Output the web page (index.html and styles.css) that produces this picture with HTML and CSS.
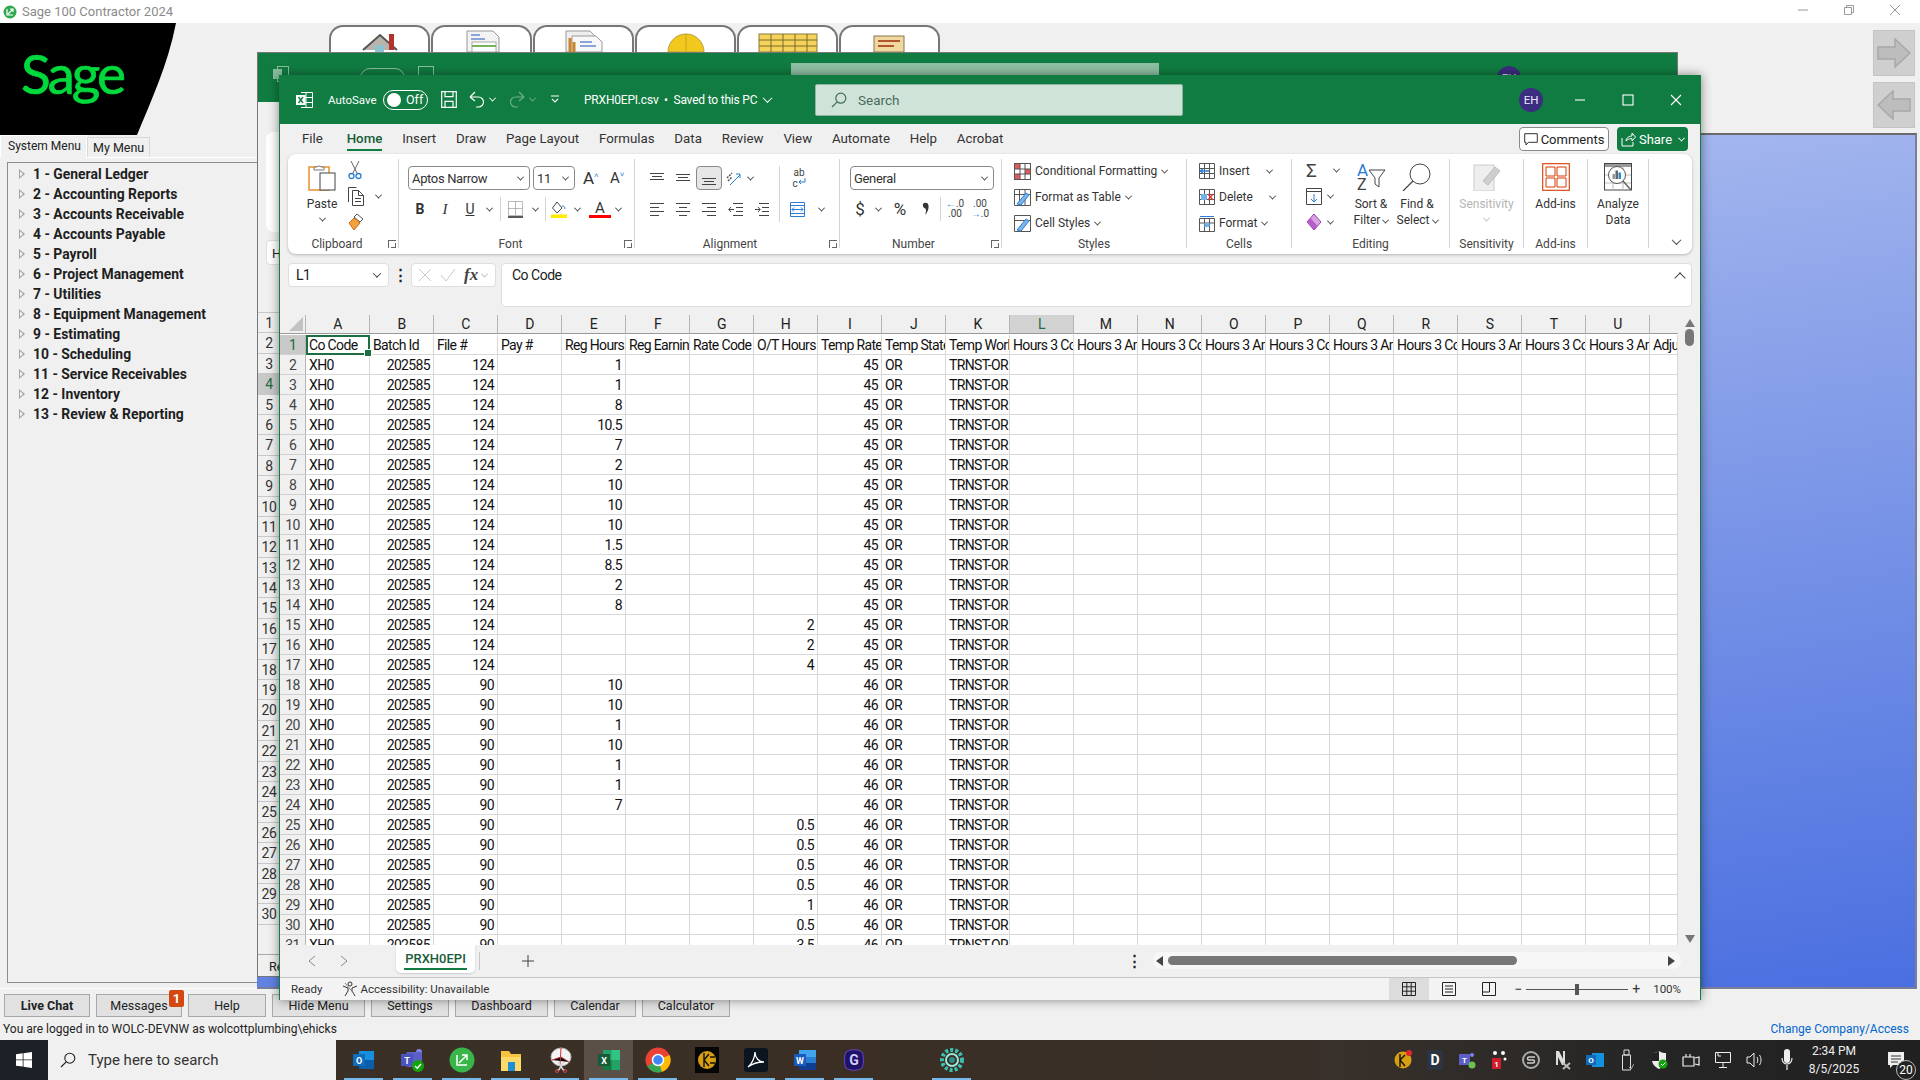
FILE: index.html
```html
<!DOCTYPE html>
<html lang="en">
<head>
    <meta charset="UTF-8">
    <title>Sage 100 Contractor 2024</title>
    <link rel="stylesheet" href="styles.css">
</head>
<body>
    <!-- Sage main window -->
    <div class="app-title">
        <svg class="app-logo" width="14" height="14" viewBox="0 0 14 14"><circle cx="7" cy="7" r="6.5" fill="#2fa84f"/><path d="M4 4v6h6M5 9l5-5M7 4h3v3" fill="none" stroke="#fff" stroke-width="1.2"/></svg>
        <span class="app-name">Sage 100 Contractor 2024</span>
        <div class="win-btns">
            <svg width="12" height="12" viewBox="0 0 12 12"><path d="M1 6h10" stroke="#999"/></svg>
            <svg width="12" height="12" viewBox="0 0 12 12"><path d="M1.5 3.5h7v7h-7zM3.5 3.5v-2h7v7h-2" fill="none" stroke="#999"/></svg>
            <svg width="12" height="12" viewBox="0 0 12 12"><path d="M1 1l10 10M11 1L1 11" stroke="#999"/></svg>
        </div>
    </div>

    <div class="app-body">
        <aside class="sidebar">
            <div class="logo">
                <svg class="logo-bg" width="176" height="112" viewBox="0 0 176 112"><path d="M0 0H176C168 42 150 80 137 112H0z" fill="#000"/></svg>
                <span class="logo-text">Sage</span>
            </div>
            <div class="menu-tabs">
                <div class="menu-tab active">System Menu</div>
                <div class="menu-tab">My Menu</div>
            </div>
            <ul class="tree">
                <li>1 - General Ledger</li>
                <li>2 - Accounting Reports</li>
                <li>3 - Accounts Receivable</li>
                <li>4 - Accounts Payable</li>
                <li>5 - Payroll</li>
                <li>6 - Project Management</li>
                <li>7 - Utilities</li>
                <li>8 - Equipment Management</li>
                <li>9 - Estimating</li>
                <li>10 - Scheduling</li>
                <li>11 - Service Receivables</li>
                <li>12 - Inventory</li>
                <li>13 - Review &amp; Reporting</li>
            </ul>
        </aside>
        <main class="workspace">
            <div class="workspace-top">
                <div class="tool-tabs">
                    <div class="tool-tab"><svg width="44" height="24" viewBox="0 0 44 24"><path d="M5 22L22 7l17 15" fill="#b8b4aa" stroke="#555" stroke-width="2"/><rect x="31" y="6" width="5" height="16" fill="#b3322c"/><rect x="17" y="17" width="9" height="7" fill="#8fc3cf"/></svg></div>
                    <div class="tool-tab"><svg width="44" height="24" viewBox="0 0 44 24"><path d="M7 3h26l6 6v15H7z" fill="#f3f3f3" stroke="#999"/><path d="M11 7h9M11 11h14" stroke="#8aa3d8" stroke-width="2"/><rect x="12" y="14" width="24" height="10" fill="#fff" stroke="#aaa"/><path d="M12 18h24" stroke="#76b35a" stroke-width="2"/></svg></div>
                    <div class="tool-tab"><svg width="48" height="24" viewBox="0 0 48 24"><path d="M6 3h24l6 6v15H6z" fill="#eee" stroke="#999"/><path d="M12 8h24l6 6v10H12z" fill="#f8f8f8" stroke="#999"/><path d="M10 10v14M14 14v10" stroke="#c8862f" stroke-width="3"/><path d="M20 14h12M20 18h16" stroke="#8aa3d8" stroke-width="2"/></svg></div>
                    <div class="tool-tab"><svg width="44" height="24" viewBox="0 0 44 24"><path d="M4 24a18 18 0 0 1 36 0z" fill="#f2c81e" stroke="#b6a03a"/><path d="M22 6v18" stroke="#caa51a"/></svg></div>
                    <div class="tool-tab"><svg width="62" height="24" viewBox="0 0 62 24"><rect x="2" y="6" width="58" height="18" fill="#f5d35a" stroke="#8a7a3a"/><path d="M2 12h58M2 18h58M14 6v18M26 6v18M38 6v18M50 6v18" stroke="#7a6a2a"/></svg></div>
                    <div class="tool-tab"><svg width="44" height="24" viewBox="0 0 44 24"><rect x="6" y="8" width="30" height="16" fill="#f0d9a0" stroke="#88774a"/><path d="M10 13h22M10 18h16" stroke="#b2552c" stroke-width="2"/></svg></div>
                </div>
                <div class="nav-arrows">
                    <div class="nav-arrow"><svg width="34" height="30" viewBox="0 0 34 30"><path d="M1 9h17V1l15 14-15 14v-8H1z" fill="#bdbdbd" stroke="#a8a8a8" stroke-width="1.5"/></svg></div>
                    <div class="nav-arrow"><svg width="34" height="30" viewBox="0 0 34 30"><path d="M33 9H16V1L1 15l15 14v-8h17z" fill="#bdbdbd" stroke="#a8a8a8" stroke-width="1.5"/></svg></div>
                </div>
            </div>
            <div class="blue-panel"></div>
        </main>
    </div>

    <div class="app-buttons">
        <button class="app-btn bold w86">Live Chat</button>
        <button class="app-btn w86 has-badge">Messages<span class="badge">1</span></button>
        <button class="app-btn w78">Help</button>
        <button class="app-btn w93">Hide Menu</button>
        <button class="app-btn w78">Settings</button>
        <button class="app-btn w93">Dashboard</button>
        <button class="app-btn w82">Calendar</button>
        <button class="app-btn w88">Calculator</button>
    </div>
    <div class="app-status">
        <span>You are logged in to WOLC-DEVNW as wolcottplumbing\ehicks</span>
        <a class="change-link">Change Company/Access</a>
    </div>

    <!-- Excel window behind -->
    <div class="xl-window back">
        <div class="xl-title ghost">
            <svg class="xl-icon" width="16" height="16" viewBox="0 0 16 16"><rect x="4.5" y=".5" width="11" height="15" fill="none" stroke="#fff"/><rect y="3" width="9" height="10" fill="#fff"/></svg>
            <span class="toggle ghost-toggle"></span>
            <svg class="ghost-save" width="16" height="16" viewBox="0 0 16 16"><rect x=".5" y=".5" width="15" height="15" fill="none" stroke="#fff"/></svg>
            <div class="ghost-search"></div>
            <span class="avatar ghost-avatar">EH</span>
        </div>
        <div class="back-ribbon"></div>
        <div class="back-name">H</div>
        <ul class="back-rows">
            <li>1</li><li>2</li><li>3</li><li class="sel">4</li><li>5</li><li>6</li><li>7</li><li>8</li><li>9</li><li>10</li>
            <li>11</li><li>12</li><li>13</li><li>14</li><li>15</li><li>16</li><li>17</li><li>18</li><li>19</li><li>20</li>
            <li>21</li><li>22</li><li>23</li><li>24</li><li>25</li><li>26</li><li>27</li><li>28</li><li>29</li><li>30</li>
        </ul>
        <div class="back-status">Re</div>
    </div>

    <!-- Excel window in front -->
    <div class="xl-window front">
        <div class="xl-title">
            <svg class="xl-icon" width="17" height="16" viewBox="0 0 17 16"><path d="M5 .5h11.5v15H5M10 .5v15M5 5.5h11.5M5 10.5h11.5" fill="none" stroke="#fff"/><rect y="3" width="9.5" height="10" fill="#fff"/><path d="M2.5 5l4.5 6M7 5l-4.5 6" stroke="#107c41" stroke-width="1.4"/></svg>
            <span class="autosave">AutoSave</span>
            <span class="toggle"><i></i>Off</span>
            <svg class="qat save" width="16" height="17" viewBox="0 0 16 17"><path d="M.7.7h14.6v15.6H.7zM4 .7v5h8v-5M4 16.3v-6h8v6" fill="none" stroke="#fff" stroke-width="1.2"/></svg>
            <svg class="qat undo" width="16" height="18" viewBox="0 0 16 18"><path d="M1 7h8.5a5 5 0 0 1 0 10H7M1 7l5-5M1 7l5 4" fill="none" stroke="#fff" stroke-width="1.2" transform="translate(0 -1)"/></svg>
            <i class="chev light"></i>
            <svg class="qat redo" width="16" height="18" viewBox="0 0 16 18"><path d="M15 6H6.5a5 5 0 0 0 0 10H9M15 6l-5-5M15 6l-5 4" fill="none" stroke="#6fae8c" stroke-width="1.2"/></svg>
            <i class="chev dim"></i>
            <svg class="qat more" width="10" height="9" viewBox="0 0 10 9"><path d="M1 1h8M2 4l3 3 3-3" fill="none" stroke="#fff" stroke-width="1.1"/></svg>
            <span class="doc-name">PRXH0EPI.csv &nbsp;&#8226;&nbsp; Saved to this PC</span>
            <i class="chev light big"></i>
            <div class="search">
                <svg width="16" height="16" viewBox="0 0 16 16"><circle cx="9.8" cy="6.2" r="5" fill="none" stroke="#3f6f57" stroke-width="1.2"/><path d="M6.2 9.8L1 15" stroke="#3f6f57" stroke-width="1.2"/></svg>
                <span>Search</span>
            </div>
            <span class="avatar">EH</span>
            <div class="xl-ctrls">
                <svg width="12" height="12" viewBox="0 0 12 12"><path d="M1 6h10" stroke="#fff" stroke-width="1.1"/></svg>
                <svg width="12" height="12" viewBox="0 0 12 12"><rect x="1" y="1" width="10" height="10" fill="none" stroke="#fff" stroke-width="1.1"/></svg>
                <svg width="12" height="12" viewBox="0 0 12 12"><path d="M1 1l10 10M11 1L1 11" stroke="#fff" stroke-width="1.1"/></svg>
            </div>
        </div>

        <div class="tabs-row">
            <nav class="ribbon-tabs">
                <a>File</a><a class="on">Home</a><a>Insert</a><a>Draw</a><a>Page Layout</a><a>Formulas</a><a>Data</a><a>Review</a><a>View</a><a>Automate</a><a>Help</a><a>Acrobat</a>
            </nav>
            <button class="comments"><svg width="14" height="13" viewBox="0 0 14 13"><path d="M.7.7h12.6v8.6H4.5L2 12V9.300H.7z" fill="none" stroke="#333"/></svg>Comments</button>
            <button class="share"><svg width="15" height="15" viewBox="0 0 15 15"><path d="M1 6v8h11v-4M5 9c0-3 3-5 6-5V1l3.500 4L11 9V6.500C8.500 6.500 6.500 7.500 5 9z" fill="none" stroke="#fff"/></svg>Share<i class="chev light"></i></button>
        </div>

        <div class="ribbon">
            <section class="group clipboard">
                <div class="group-body">
                    <div class="big-btn paste">
                        <svg width="28" height="28" viewBox="0 0 28 28"><rect x="1" y="4" width="20" height="23" fill="#fff" stroke="#e8912d" stroke-width="1.500"/><path d="M6 4h3a2.500 2.500 0 0 1 4 0h3v3H6z" fill="#fff" stroke="#777"/><rect x="12" y="10" width="15" height="17" fill="#fff" stroke="#444"/></svg>
                        <span>Paste</span>
                        <i class="chev"></i>
                    </div>
                    <div class="tool-col">
                        <svg width="14" height="20" viewBox="0 0 14 20"><path d="M3 1l6 12M11 1L5 13" stroke="#666" fill="none"/><circle cx="3.500" cy="16" r="2.500" fill="none" stroke="#2b7cd3" stroke-width="1.300"/><circle cx="10.500" cy="16" r="2.500" fill="none" stroke="#2b7cd3" stroke-width="1.300"/></svg>
                        <div class="row-i"><svg width="16" height="19" viewBox="0 0 16 19"><path d="M.5 15V.5h8M4.500 3.500h6l5 5v10h-11zM10.500 3.500v5h5M7 11.500h6M7 14.500h6" fill="none" stroke="#444"/></svg><i class="chev ml12"></i></div>
                        <svg width="16" height="18" viewBox="0 0 16 18"><path d="M9 1l6 5-3 3-6-5z" fill="#fff" stroke="#555"/><path d="M6 5L1 10l5 7 6-7z" fill="#f0a23c" stroke="#d4661b"/></svg>
                    </div>
                </div>
                <div class="group-label">Clipboard<i class="launcher"></i></div>
            </section>

            <section class="group font">
                <div class="group-body col">
                    <div class="tool-row first">
                        <div class="select w122"><span>Aptos Narrow</span><i class="chev"></i></div>
                        <div class="select w42"><span>11</span><i class="chev"></i></div>
                        <span class="grow-a">A<sup>&#708;</sup></span>
                        <span class="shrink-a">A<sup>&#709;</sup></span>
                    </div>
                    <div class="tool-row">
                        <span class="ti w24 b">B</span>
                        <span class="ti w26 it">I</span>
                        <span class="ti w24 un">U</span>
                        <span class="ti w14"><i class="chev"></i></span>
                        <span class="vsep m4"></span>
                        <span class="ti w20"><svg width="15" height="17" viewBox="0 0 15 17"><path d="M.5.500h14v14H.500z M7.500.500v14M.500 7.500h14" fill="none" stroke="#777" stroke-dasharray="1 1"/><path d="M0 16h15" stroke="#222" stroke-width="1.500"/></svg></span>
                        <span class="ti w20"><i class="chev"></i></span>
                        <span class="vsep"></span>
                        <span class="ti w26"><svg width="16" height="17" viewBox="0 0 16 17"><path d="M6 1L1.500 7 6 12l5-5z" fill="#fff" stroke="#444"/><path d="M11 5c2 0 3 1 3 3" fill="none" stroke="#2b7cd3"/><rect y="13.500" width="16" height="3.500" fill="#ffeb00"/></svg></span>
                        <span class="ti w10"><i class="chev"></i></span>
                        <span class="ti w22 ml7 color-a">A</span>
                        <span class="ti w14"><i class="chev"></i></span>
                    </div>
                </div>
                <div class="group-label">Font<i class="launcher"></i></div>
            </section>

            <section class="group align">
                <div class="group-body">
                    <div class="col align-left">
                        <div class="tool-row first">
                            <span class="ti w26"><svg class="lines" width="14" height="10" viewBox="0 0 14 10"><path d="M0 .5h14M2 3.500h10M0 6.500h14"/></svg></span>
                            <span class="ti w26"><svg class="lines" width="14" height="10" viewBox="0 0 14 10"><path d="M0 1.500h14M2 4.500h10M0 7.500h14"/></svg></span>
                            <span class="ti w26 picked"><svg class="lines" width="14" height="14" viewBox="0 0 14 14"><path d="M0 7.500h14M2 10.500h10M0 13.500h14"/></svg></span>
                            <span class="ti w22"><svg width="16" height="16" viewBox="0 0 16 16"><path d="M2 8l5-5M3 11l4-4" stroke="#555" fill="none" stroke-width="1.500" stroke-dasharray="2 1"/><path d="M5 15L15 5M11 4h4v4" stroke="#2b7cd3" fill="none"/></svg></span>
                            <span class="ti w12"><i class="chev"></i></span>
                        </div>
                        <div class="tool-row">
                            <span class="ti w26"><svg class="lines" width="14" height="13" viewBox="0 0 14 13"><path d="M0 .5h14M0 4.500h9M0 8.500h14M0 12.500h9"/></svg></span>
                            <span class="ti w26"><svg class="lines" width="14" height="13" viewBox="0 0 14 13"><path d="M0 .5h14M3 4.500h8M0 8.500h14M3 12.500h8"/></svg></span>
                            <span class="ti w26"><svg class="lines" width="14" height="13" viewBox="0 0 14 13"><path d="M0 .5h14M5 4.500h9M0 8.500h14M5 12.500h9"/></svg></span>
                            <span class="ti w26"><svg class="lines" width="15" height="13" viewBox="0 0 15 13"><path d="M5 .5h10M8 4.500h7M8 8.500h7M5 12.500h10"/><path d="M6 6.500H1M3 4L.8 6.500 3 9" fill="none" stroke="#2b7cd3"/></svg></span>
                            <span class="ti w26"><svg class="lines" width="15" height="13" viewBox="0 0 15 13"><path d="M5 .5h10M8 4.500h7M8 8.500h7M5 12.500h10"/><path d="M1 6.500h5M4 4l2.200 2.500L4 9" fill="none" stroke="#2b7cd3"/></svg></span>
                        </div>
                    </div>
                    <span class="vsep tall"></span>
                    <div class="col align-right">
                        <div class="tool-row first"><span class="ti w26 wrap-ab">ab<br>c<svg width="8" height="9" viewBox="0 0 8 9"><path d="M7 0v4H1M3 2L1 4l2 2" fill="none" stroke="#2b7cd3"/></svg></span></div>
                        <div class="tool-row">
                            <span class="ti w22"><svg width="15" height="15" viewBox="0 0 15 15"><path d="M.5.500h14v14H.500zM.500 3.500h14M.500 11.500h14" fill="none" stroke="#2b7cd3"/><path d="M2 7.500h11M4 5.500l-2 2 2 2M11 5.500l2 2-2 2" fill="none" stroke="#2b7cd3"/></svg></span>
                            <span class="ti w12 ml7"><i class="chev"></i></span>
                        </div>
                    </div>
                </div>
                <div class="group-label pad14">Alignment<i class="launcher"></i></div>
            </section>

            <section class="group number">
                <div class="group-body col">
                    <div class="tool-row first"><div class="select w144"><span>General</span><i class="chev"></i></div></div>
                    <div class="tool-row">
                        <span class="ti w20 sym">$</span>
                        <span class="ti w16"><i class="chev"></i></span>
                        <span class="ti w20 ml4 sym">%</span>
                        <span class="ti w20 ml6"><svg width="8" height="14" viewBox="0 0 8 14"><path d="M1 2a3 3 0 0 1 5 0c1.500 3 0 8-3 11 1-3 1.500-5 .5-6.500C2 6.500.5 4.500 1 2z" fill="#333"/></svg></span>
                        <span class="vsep m4"></span>
                        <span class="ti w20 dec"><b>&#8592;</b>.0<br>.00</span>
                        <span class="ti w20 ml5 dec">.00<br><b>&#8594;</b>.0</span>
                    </div>
                </div>
                <div class="group-label pad14">Number<i class="launcher"></i></div>
            </section>

            <section class="group styles">
                <div class="group-body">
                    <div class="tool-col text-col">
                        <div class="row-i"><svg width="17" height="17" viewBox="0 0 17 17"><rect x=".5" y=".5" width="16" height="16" fill="#fff" stroke="#555"/><rect x="1" y="1" width="5" height="5" fill="#e05a5a"/><rect x="11" y="6" width="5" height="5" fill="#e05a5a"/><rect x="1" y="11" width="5" height="5" fill="#e05a5a"/><path d="M6 .5v16M11 .5v16M.5 6h16M.5 11h16" stroke="#555"/></svg><span>Conditional Formatting</span><i class="chev"></i></div>
                        <div class="row-i"><svg width="17" height="17" viewBox="0 0 17 17"><path d="M.5.500h16v16H.500zM.500 5.500h16M5.500.500v16M11 .500v16" fill="#fff" stroke="#555"/><path d="M3 15L12 4l3 2L7 16z" fill="#7cb5ec" stroke="#2b7cd3"/></svg><span>Format as Table</span><i class="chev"></i></div>
                        <div class="row-i"><svg width="17" height="17" viewBox="0 0 17 17"><path d="M.5.500h16v16H.500zM.500 5.500h16" fill="#fff" stroke="#555"/><path d="M3 15L12 4l3 2L7 16z" fill="#7cb5ec" stroke="#2b7cd3"/></svg><span>Cell Styles</span><i class="chev"></i></div>
                    </div>
                </div>
                <div class="group-label">Styles</div>
            </section>

            <section class="group cells">
                <div class="group-body">
                    <div class="tool-col text-col">
                        <div class="row-i"><svg width="16" height="16" viewBox="0 0 16 16"><path d="M.5.500h15v15H.500zM.500 5.500h15M.500 10.500h15M5.500.500v15M10.500.500v15" fill="#fff" stroke="#555"/><path d="M1 8h9M4 5.500L1.500 8 4 10.500" stroke="#2b7cd3" fill="none" stroke-width="1.300"/></svg><span>Insert</span><i class="chev ml18"></i></div>
                        <div class="row-i"><svg width="16" height="16" viewBox="0 0 16 16"><path d="M.5.500h15v15H.500zM.500 5.500h15M.500 10.500h15M5.500.500v15M10.500.500v15" fill="#fff" stroke="#555"/><rect x="2" y="5" width="6" height="6" fill="#6fb3e8"/><path d="M9 5l5 6M14 5l-5 6" stroke="#e03a3a" stroke-width="1.300"/></svg><span>Delete</span><i class="chev ml18"></i></div>
                        <div class="row-i"><svg width="16" height="17" viewBox="0 0 16 17"><path d="M.5 3.500h15v13H.500zM.500 8h15M5.500 3.500v13M10.500 3.500v13" fill="#fff" stroke="#555"/><rect x="5.500" y="8" width="5" height="4" fill="#6fb3e8"/><path d="M1 1.500h14" stroke="#2b7cd3"/></svg><span>Format</span><i class="chev"></i></div>
                    </div>
                </div>
                <div class="group-label">Cells</div>
            </section>

            <section class="group editing">
                <div class="group-body">
                    <div class="tool-col edit-col">
                        <div class="row-i"><span class="sigma">&#931;</span><i class="chev ml12"></i></div>
                        <div class="row-i"><svg width="16" height="17" viewBox="0 0 16 17"><path d="M.5.500h15v16H.500zM.500 3.500h15" fill="#fff" stroke="#444"/><path d="M8 6v8M5 11l3 3 3-3" fill="none" stroke="#2b7cd3"/></svg><i class="chev ml6"></i></div>
                        <div class="row-i"><svg width="16" height="18" viewBox="0 0 16 18"><path d="M8 1l7 8-7 8-7-8z" fill="#d9a3e3" stroke="#9a3db0"/><path d="M1 9l7 8 3.500-4L4.500 5z" fill="#b55ec9"/></svg><i class="chev ml6"></i></div>
                    </div>
                    <div class="big-btn w40">
                        <svg width="30" height="28" viewBox="0 0 30 28"><text x="1" y="13" class="sort-a">A</text><text x="1" y="27" class="sort-z">Z</text><path d="M13 7h16l-6 8v9l-4-3v-6z" fill="#fff" stroke="#444"/></svg>
                        <span>Sort &amp;</span>
                        <span>Filter<i class="chev ml3"></i></span>
                    </div>
                    <div class="big-btn w40 ml6">
                        <svg width="30" height="28" viewBox="0 0 30 28"><circle cx="18" cy="11" r="10" fill="#fff" stroke="#444"/><path d="M11 18L1 28" stroke="#444" stroke-width="1.200"/></svg>
                        <span>Find &amp;</span>
                        <span>Select<i class="chev ml3"></i></span>
                    </div>
                </div>
                <div class="group-label">Editing</div>
            </section>

            <section class="group sensitivity">
                <div class="group-body">
                    <div class="big-btn disabled">
                        <svg width="28" height="28" viewBox="0 0 28 28"><rect x="1" y="2" width="20" height="26" fill="#eee" stroke="#ccc"/><path d="M10 18L22 4l5 4-12 14z" fill="#cfcfcf" stroke="#bbb"/></svg>
                        <span>Sensitivity</span>
                        <i class="chev pale"></i>
                    </div>
                </div>
                <div class="group-label">Sensitivity</div>
            </section>

            <section class="group addins">
                <div class="group-body">
                    <div class="big-btn">
                        <svg width="28" height="28" viewBox="0 0 28 28"><rect x=".7" y=".7" width="26.600" height="26.600" fill="none" stroke="#d83b01" stroke-width="1.100"/><path d="M4 4h9v9H4zM15 4h9v9h-9zM4 15h9v9H4zM15 15h9v9h-9z" fill="none" stroke="#d83b01"/></svg>
                        <span>Add-ins</span>
                    </div>
                </div>
                <div class="group-label">Add-ins</div>
            </section>

            <section class="group analyze">
                <div class="group-body">
                    <div class="big-btn">
                        <svg width="28" height="28" viewBox="0 0 28 28"><rect x=".5" y=".5" width="27" height="26.500" fill="#fff" stroke="#444"/><rect x="1" y="1" width="26" height="3" fill="#999"/><path d="M1 12h26M1 20h26M9 4v23M19 4v23" stroke="#bbb"/><circle cx="13" cy="12" r="8.500" fill="#fff" stroke="#555"/><rect x="8.500" y="11" width="2.500" height="5" fill="#999"/><rect x="11.500" y="7.500" width="2.500" height="8.500" fill="#666"/><rect x="14.500" y="9.500" width="2.500" height="6.500" fill="#2b8ad3"/><path d="M19 18l8 9" stroke="#666" stroke-width="1.500"/></svg>
                        <span>Analyze</span>
                        <span>Data</span>
                    </div>
                </div>
                <div class="group-label"></div>
            </section>
            <i class="chev collapse"></i>
        </div>

        <div class="formula-row">
            <div class="name-box"><span>L1</span><i class="chev"></i></div>
            <span class="dots">&#8942;</span>
            <div class="fx-box">
                <svg width="14" height="14" viewBox="0 0 14 14"><path d="M1 1l12 12M13 1L1 13" stroke="#c8c8c8"/></svg>
                <svg width="16" height="14" viewBox="0 0 16 14"><path d="M1 7l5 6L15 1" fill="none" stroke="#c8c8c8"/></svg>
                <span class="fx">fx</span>
                <i class="chev pale"></i>
            </div>
            <div class="formula-input"><span>Co Code</span><i class="chev up"></i></div>
        </div>

        <div class="sheet-area">
            <div class="sheet" id="sheet"></div>
            <div class="vscroll">
                <svg width="10" height="8" viewBox="0 0 10 8"><path d="M5 0l5 8H0z" fill="#777"/></svg>
                <span class="vthumb"></span>
                <svg class="vdown" width="10" height="8" viewBox="0 0 10 8"><path d="M0 0h10L5 8z" fill="#777"/></svg>
            </div>
        </div>

        <div class="sheet-bar">
            <svg class="nav-l" width="8" height="12" viewBox="0 0 8 12"><path d="M7 1L1 6l6 5" fill="none" stroke="#888"/></svg>
            <svg class="nav-r" width="8" height="12" viewBox="0 0 8 12"><path d="M1 1l6 5-6 5" fill="none" stroke="#888"/></svg>
            <div class="sheet-tab"><span>PRXH0EPI</span></div>
            <span class="tab-sep"></span>
            <svg class="add-sheet" width="12" height="12" viewBox="0 0 12 12"><path d="M6 0v12M0 6h12" stroke="#444"/></svg>
            <span class="dots bar-dots">&#8942;</span>
            <div class="hscroll">
                <svg width="7" height="10" viewBox="0 0 7 10"><path d="M7 0v10L0 5z" fill="#444"/></svg>
                <span class="hthumb"></span>
                <svg class="hright" width="7" height="10" viewBox="0 0 7 10"><path d="M0 0v10l7-5z" fill="#444"/></svg>
            </div>
        </div>

        <div class="status-bar">
            <span class="ready">Ready</span>
            <svg class="access" width="16" height="16" viewBox="0 0 16 16"><circle cx="8" cy="3" r="2" fill="none" stroke="#333"/><path d="M1 5l5 2v3l-3 5M15 5l-5 2v3l3 5" fill="none" stroke="#333"/><path d="M3 2l10 12" stroke="#888"/></svg>
            <span class="access-text">Accessibility: Unavailable</span>
            <div class="view-btn on"><svg width="14" height="14" viewBox="0 0 14 14"><path d="M.5.500h13v13H.500zM.500 4.800h13M.500 9.200h13M4.800.500v13M9.200.500v13" fill="none" stroke="#222"/></svg></div>
            <div class="view-btn"><svg width="14" height="14" viewBox="0 0 14 14"><path d="M.5.500h13v13H.500zM3 4h8M3 7h8M3 10h8" fill="none" stroke="#222"/></svg></div>
            <div class="view-btn"><svg width="14" height="14" viewBox="0 0 14 14"><path d="M.5.500h13v13H.500zM.500 10h7V.500" fill="none" stroke="#222"/></svg></div>
            <div class="zoom">
                <span class="zoom-sign">&minus;</span>
                <div class="zoom-track"><i></i></div>
                <span class="zoom-sign">+</span>
                <span class="zoom-val">100%</span>
            </div>
        </div>
    </div>

    <!-- Taskbar -->
    <footer class="taskbar">
        <div class="start"><svg width="16" height="16" viewBox="0 0 16 16"><path d="M0 2.300L6.700 1.300V7.500H0zM7.500 1.200L16 0V7.500H7.500zM0 8.300H6.700V14.600L0 13.700zM7.500 8.300H16V16L7.500 14.800z" fill="#fff"/></svg></div>
        <div class="task-search">
            <svg width="16" height="16" viewBox="0 0 16 16"><circle cx="9.800" cy="6.200" r="5" fill="none" stroke="#222" stroke-width="1.100"/><path d="M6.200 9.800L1 15" stroke="#222" stroke-width="1.200"/></svg>
            <span>Type here to search</span>
        </div>
        <div class="task-apps">
            <div class="app on"><svg width="24" height="24" viewBox="0 0 24 24"><rect x="7" y="3" width="15" height="18" fill="#1490df"/><path d="M7 12h15v9H7z" fill="#0a5fa8"/><rect x="1" y="6" width="12" height="12" fill="#0f6cbd"/><text x="7" y="15.500" class="ico-t">O</text></svg></div>
            <div class="app on"><svg width="26" height="26" viewBox="0 0 26 26"><circle cx="19" cy="5" r="3" fill="#7b83eb"/><rect x="6" y="5" width="16" height="15" rx="2" fill="#5b5fc7"/><rect x="1" y="7" width="12" height="12" fill="#4b53bc"/><text x="7" y="16.500" class="ico-t">T</text><circle cx="18" cy="19" r="6" fill="#13a10e"/><path d="M15 19l2.200 2.200L21 17" fill="none" stroke="#fff" stroke-width="1.300"/></svg></div>
            <div class="app on"><svg width="26" height="26" viewBox="0 0 26 26"><circle cx="13" cy="13" r="12.500" fill="#39b54a"/><path d="M8 8v10h10M10 16l8-8M13 8h5v5" fill="none" stroke="#fff" stroke-width="1.500"/></svg></div>
            <div class="app on"><svg width="24" height="24" viewBox="0 0 24 24"><path d="M2 3h8l2 3h10v17H2z" fill="#f5c542"/><path d="M2 9h20v14H2z" fill="#fcd968"/><rect x="9" y="14" width="7" height="9" fill="#1c8fd6"/></svg></div>
            <div class="app on"><svg width="26" height="26" viewBox="0 0 26 26"><ellipse cx="14" cy="10" rx="10" ry="9" fill="#f3f3f3" stroke="#b8b8b8"/><path d="M14 1l-1 17M5 13l9-3 8 5" stroke="#c9343a"/><path d="M11 15l6 9M17 15l-6 9" stroke="#d8d8d8" stroke-width="1.500"/><circle cx="10" cy="24" r="1.500" fill="none" stroke="#d04a4a"/><circle cx="18" cy="24" r="1.500" fill="none" stroke="#d04a4a"/></svg></div>
            <div class="app on active"><svg width="24" height="24" viewBox="0 0 24 24"><rect x="6" y="2" width="17" height="20" fill="#21a366"/><path d="M14.500 2H23v10h-8.500z" fill="#33c481"/><path d="M6 12h8.500v10H6z" fill="#107c41"/><rect x="1" y="6" width="12" height="12" fill="#185c37"/><text x="7" y="15.500" class="ico-t">X</text></svg></div>
            <div class="app on"><svg width="26" height="26" viewBox="0 0 26 26"><circle cx="13" cy="13" r="12.500" fill="#ea4335"/><path d="M13 13L2.200 19.200A12.500 12.500 0 0 0 17 24.800z" fill="#34a853"/><path d="M13 13l4 11.800A12.500 12.500 0 0 0 24.600 8z" fill="#fbbc05"/><circle cx="13" cy="13" r="5.500" fill="#4285f4" stroke="#fff" stroke-width="1.500"/></svg></div>
            <div class="app"><svg width="24" height="26" viewBox="0 0 24 26"><rect width="24" height="26" fill="#050505"/><circle cx="12" cy="13" r="9" fill="#d69e12"/><path d="M9 6v14M9 13l5-6M9 13l5 6M15 10h5M15 16h5" stroke="#111" stroke-width="1.400"/></svg></div>
            <div class="app on"><svg width="24" height="24" viewBox="0 0 24 24"><rect width="24" height="24" rx="3" fill="#0c1420"/><path d="M4 19c4-3 7-10 7-15 0 6 4 10 9 10-5 0-11 1-16 5z" fill="none" stroke="#fff" stroke-width="1.300"/></svg></div>
            <div class="app on"><svg width="24" height="24" viewBox="0 0 24 24"><rect x="6" y="2" width="17" height="20" fill="#2b7cd3"/><path d="M6 2h17v7H6z" fill="#41a5ee"/><path d="M6 15h17v7H6z" fill="#103f91"/><rect x="1" y="6" width="12" height="12" fill="#185abd"/><text x="7" y="15.500" class="ico-t">W</text></svg></div>
            <div class="app on"><svg width="24" height="24" viewBox="0 0 24 24"><path d="M4 4c5-3 11-3 16 0 2 5 2 11 0 16-5 3-11 3-16 0-2-5-2-11 0-16z" fill="#1b1464" stroke="#6c40c9"/><text x="12" y="17" class="ico-q">G</text></svg></div>
            <div class="app"></div>
            <div class="app on"><svg width="26" height="26" viewBox="0 0 26 26"><circle cx="13" cy="13" r="10" fill="none" stroke="#3dbfb0" stroke-width="4" stroke-dasharray="3 2"/><circle cx="13" cy="13" r="6" fill="none" stroke="#9be8dd" stroke-width="2"/><circle cx="13" cy="13" r="3" fill="#2a8f87"/></svg></div>
        </div>
        <div class="tray">
            <span class="t-ico"><svg width="18" height="22" viewBox="0 0 18 22"><circle cx="9" cy="11" r="8.500" fill="#d69e12"/><path d="M6 5v13M6 11l5-5M6 11l5 6" stroke="#111" stroke-width="1.400"/><circle cx="15" cy="4" r="3" fill="#e02a2a"/></svg></span>
            <span class="t-ico"><svg width="16" height="20" viewBox="0 0 16 20"><rect width="16" height="20" fill="#2b3440"/><text x="8" y="15" class="ico-d">D</text></svg></span>
            <span class="t-ico"><svg width="18" height="18" viewBox="0 0 18 18"><rect x="1" y="3" width="11" height="11" fill="#5b5fc7"/><text x="6.500" y="12" class="ico-s">T</text><circle cx="14" cy="4" r="2" fill="#7b83eb"/><circle cx="14" cy="14" r="3.500" fill="#6cc24a"/></svg></span>
            <span class="t-ico"><svg width="18" height="20" viewBox="0 0 18 20"><circle cx="5" cy="3" r="2" fill="#fff"/><circle cx="13" cy="3" r="2" fill="#fff"/><circle cx="15" cy="9" r="1.500" fill="#fff"/><rect x="2" y="8" width="9" height="11" fill="#d21c2c"/><text x="6.500" y="17" class="ico-s">1</text></svg></span>
            <span class="t-ico"><svg width="18" height="18" viewBox="0 0 18 18"><circle cx="9" cy="9" r="8" fill="none" stroke="#aaa" stroke-width="2"/><path d="M13 6H7a1.500 1.500 0 0 0 0 3h4a1.500 1.500 0 0 1 0 3H5" fill="none" stroke="#ccc" stroke-width="1.500"/></svg></span>
            <span class="t-ico"><svg width="18" height="20" viewBox="0 0 18 20"><path d="M2 1h3l4 8V1h2v14H8L4 7v8H2z" fill="#ddd"/><path d="M9 13l7 6M16 13l-7 6" stroke="#bbb" stroke-width="2"/></svg></span>
            <span class="t-ico"><svg width="18" height="18" viewBox="0 0 18 18"><rect x="6" y="2" width="12" height="14" fill="#1490df"/><rect y="4" width="10" height="10" fill="#0f6cbd"/><text x="5" y="12" class="ico-s">O</text></svg></span>
            <span class="t-ico"><svg width="14" height="22" viewBox="0 0 14 22"><path d="M4 1h5v5H4zM2.500 6h8v15h-8z" fill="none" stroke="#ddd"/><path d="M9 18l2 2 3-5" fill="none" stroke="#aaa"/></svg></span>
            <span class="t-ico"><svg width="18" height="20" viewBox="0 0 18 20"><path d="M9 1c3 2 5 2 7 2v7c0 4-3 7-7 9-4-2-7-5-7-9V3c2 0 4 0 7-2z" fill="#eee"/><path d="M9 1v10H2V3c2 0 4 0 7-2z" fill="#222"/><circle cx="13" cy="14" r="4.500" fill="#13a10e"/><path d="M11 14l1.500 1.500L15.500 12.500" fill="none" stroke="#fff"/></svg></span>
            <span class="t-ico"><svg width="18" height="16" viewBox="0 0 18 16"><path d="M1 5h11v9H1zM13 6l4-1v8l-4-1M4 2v3M8 2v3" fill="none" stroke="#eee" stroke-width="1.200"/></svg></span>
            <span class="t-ico"><svg width="18" height="18" viewBox="0 0 18 18"><path d="M1.500 1.500h15v10h-15zM9 11.500v5M5 16.500h8" fill="none" stroke="#eee"/><path d="M4 1.500V5h3" fill="none" stroke="#eee"/></svg></span>
            <span class="t-ico"><svg width="18" height="18" viewBox="0 0 18 18"><path d="M1 6v6h3l4 4V2L4 6zM11 6c1 2 1 4 0 6M13.500 4c2 3 2 7 0 10" fill="none" stroke="#eee"/></svg></span>
            <span class="t-ico"><svg width="12" height="22" viewBox="0 0 12 22"><rect x="3" y="0" width="6" height="14" rx="3" fill="#eee"/><path d="M1 9c0 8 10 8 10 0M6 16v5" fill="none" stroke="#eee" stroke-width="1.200"/></svg></span>
        </div>
        <div class="clock"><span>2:34 PM</span><span>8/5/2025</span></div>
        <div class="notify">
            <svg width="16" height="16" viewBox="0 0 16 16"><path d="M0 0h16v13H5l-3 3v-3H0z" fill="#eee"/><path d="M3 4h10M3 7h10M3 10h7" stroke="#333"/></svg>
            <span class="notify-count">20</span>
        </div>
    </footer>

    <script src="script.js"></script>
</body>
</html>
```

FILE: styles.css
```css
* {
    box-sizing: border-box;
}

html, body {
    margin: 0;
    padding: 0;
}

body {
    position: relative;
    width: 1920px;
    height: 1080px;
    overflow: hidden;
    display: flex;
    flex-direction: column;
    background: #f0f0f0;
    color: #222;
    font-family: Roboto, "Open Sans", sans-serif;
    font-size: 13px;
}

svg {
    display: block;
    flex: none;
}

ul {
    list-style: none;
    margin: 0;
    padding: 0;
}

/* small chevrons used all over the ribbon */
.chev {
    display: inline-block;
    flex: none;
    width: 5px;
    height: 5px;
    border-right: 1px solid #444;
    border-bottom: 1px solid #444;
    transform: rotate(45deg) translate(-1px, -1px);
}
.chev.light { border-color: #fff; }
.chev.dim { border-color: #6fae8c; }
.chev.pale { border-color: #bbb; }
.chev.big { width: 7px; height: 7px; }
.chev.up { transform: rotate(225deg); width: 8px; height: 8px; }

/* Sage window */
.app-title {
    height: 23px;
    flex: none;
    display: flex;
    align-items: center;
    padding-left: 3px;
    background: #fff;
}

.app-name {
    margin-left: 5px;
    color: #8a8a8a;
    font-size: 13px;
}

.win-btns {
    margin-left: auto;
    display: flex;
    padding: 0 19px 3px 0;
    gap: 34px;
}

.app-body {
    height: 971px;
    flex: none;
    display: flex;
}

.sidebar {
    width: 257px;
    flex: none;
    display: flex;
    flex-direction: column;
    height: 966px;
    border-bottom: 1px solid #fff;
}

.logo {
    position: relative;
    height: 112px;
    flex: none;
}

.logo-text {
    position: absolute;
    left: 21px;
    top: 15px;
    color: #00d93c;
    font-family: Lato, sans-serif;
    font-size: 55px;
    line-height: 70px;
    letter-spacing: -3px;
    -webkit-text-stroke: .7px #00d93c;
}

.menu-tabs {
    height: 23px;
    flex: none;
    display: flex;
    align-items: flex-end;
    border-bottom: 1px solid #fff;
}

.menu-tab {
    height: 20px;
    padding: 0 5px;
    line-height: 20px;
    font-size: 12.500px;
    color: #222;
    white-space: nowrap;
    border: 1px solid #d8d8d8;
    border-bottom: 0;
}

.menu-tab.active {
    width: 87px;
    height: 23px;
    padding: 0 0 0 7px;
    line-height: 21px;
    font-size: 12px;
    background: #f0f0f0;
    border-color: #fff;
    margin-bottom: -1px;
}

.tree {
    flex: 1;
    margin: 4px 0 5px 7px;
    padding-top: 1px;
    border: 1px solid #8c8c8c;
    border-right: 0;
}

.tree li {
    height: 20px;
    padding-left: 25px;
    line-height: 20px;
    font-weight: 700;
    font-size: 13.900px;
    color: #1e1e1e;
    position: relative;
}

.tree li::before, .tree li::after {
    content: "";
    position: absolute;
    top: 5px;
    left: 11px;
    border-left: 6px solid #a0a0a0;
    border-top: 5px solid transparent;
    border-bottom: 5px solid transparent;
}

.tree li::after {
    top: 7px;
    left: 12px;
    border-left: 3px solid #f4f4f4;
    border-top-width: 3px;
    border-bottom-width: 3px;
}

.workspace {
    flex: 1;
    display: flex;
    flex-direction: column;
    height: 966px;
}

.workspace-top {
    height: 110px;
    flex: none;
    display: flex;
    justify-content: space-between;
    padding-right: 5px;
}

.tool-tabs {
    display: flex;
    margin: 2px 0 0 72px;
    height: 27px;
    gap: 1px;
}

.tool-tab {
    width: 101px;
    height: 27px;
    display: flex;
    justify-content: center;
    align-items: flex-end;
    overflow: hidden;
    background: #fff;
    border: 2px solid #777;
    border-bottom: 0;
    border-radius: 14px 14px 0 0;
}

.nav-arrows {
    display: flex;
    flex-direction: column;
    gap: 6px;
    padding-top: 7px;
}

.nav-arrow {
    width: 42px;
    height: 46px;
    display: flex;
    align-items: center;
    justify-content: center;
    background: #cfcfcf;
    border: 1px solid #c4c4c4;
}

.blue-panel {
    flex: 1;
    margin-right: 3px;
    background: linear-gradient(172deg, #bac7f3 0%, #8fa6ea 35%, #4a6fe0 100%);
    border-top: 2px solid #6a6a6a;
    border-right: 2px solid #7a7f99;
    border-bottom: 2px solid #7a7f99;
}

.app-buttons {
    height: 23px;
    flex: none;
    display: flex;
    gap: 6px;
    padding-left: 4px;
}

.app-btn {
    height: 23px;
    padding: 0;
    background: #e1e1e1;
    border: 1px solid #a8a8a8;
    font: inherit;
    font-size: 12.500px;
    color: #222;
    position: relative;
}

.app-btn.bold { font-weight: 700; }
.w86 { width: 86px; }
.w78 { width: 78px; }
.w93 { width: 93px; }
.w82 { width: 82px; }
.w88 { width: 88px; }

.badge {
    position: absolute;
    right: -3px;
    top: -5px;
    width: 15px;
    height: 17px;
    background: #d4480f;
    color: #fff;
    font-weight: 700;
    font-size: 13px;
    line-height: 17px;
    border-radius: 2px;
}

.app-status {
    height: 23px;
    flex: none;
    display: flex;
    justify-content: space-between;
    align-items: center;
    padding: 0 11px 0 3px;
    font-size: 12px;
}

.change-link {
    color: #0066cc;
}

/* Excel windows */
.xl-window {
    position: absolute;
    display: flex;
    flex-direction: column;
    background: #f0f0f0;
}

.xl-window.front {
    left: 279px;
    top: 75px;
    width: 1422px;
    height: 925px;
    border: 1px solid #107c41;
    border-top: 0;
    box-shadow: 0 0 10px rgba(0, 0, 0, .45);
}

.xl-window.back {
    left: 257px;
    top: 52px;
    width: 1421px;
    height: 925px;
    border: 1px solid #777;
    overflow: hidden;
}

.xl-title {
    height: 49px;
    flex: none;
    display: flex;
    align-items: center;
    background: #107c41;
    color: #fff;
    position: relative;
    margin: 0 -1px;
    padding-left: 18px;
}

.xl-icon {
    margin-left: -1px;
}

.autosave {
    margin-left: 15px;
    width: 48px;
    font-size: 11.500px;
}

.toggle {
    width: 45px;
    height: 20px;
    margin-left: 7px;
    display: flex;
    align-items: center;
    gap: 5px;
    padding-left: 3px;
    border: 1.500px solid #fff;
    border-radius: 10px;
    font-size: 12.500px;
}

.toggle i {
    width: 14px;
    height: 14px;
    background: #fff;
    border-radius: 50%;
}

.qat.save { margin-left: 13px; }
.qat.undo { margin-left: 12px; }
.qat.redo { margin-left: 14px; }
.qat.more { margin-left: 15px; }
.xl-title > .chev { margin-left: 5px; }

.doc-name {
    margin-left: 24px;
    font-size: 12px;
    white-space: pre;
    letter-spacing: -.2px;
}

.xl-title > .chev.big { margin-left: 7px; }

.search {
    position: absolute;
    left: 536px;
    top: 9px;
    width: 368px;
    height: 32px;
    display: flex;
    align-items: center;
    gap: 11px;
    padding-left: 15px;
    background: #cfe3d8;
    border: 1px solid #8fb5a1;
    border-radius: 2px;
    color: #4a6c5a;
    font-size: 13.500px;
}

.avatar {
    position: absolute;
    left: 1240px;
    top: 13px;
    width: 24px;
    height: 24px;
    display: flex;
    align-items: center;
    justify-content: center;
    background: #3b2d7f;
    border-radius: 50%;
    font-size: 11.500px;
    color: #f0e8ff;
}

.xl-ctrls {
    position: absolute;
    right: 19px;
    top: 19px;
    display: flex;
    gap: 36px;
}

.tabs-row {
    height: 30px;
    flex: none;
    display: flex;
    align-items: center;
    padding-right: 12px;
}

.ribbon-tabs {
    display: flex;
    flex: 1;
    padding-left: 22px;
    gap: 19.800px;
    font-size: 13.300px;
    color: #333;
}

.ribbon-tabs a {
    position: relative;
    line-height: 20px;
}

.ribbon-tabs a:first-child { margin-right: 4px; }

.ribbon-tabs a.on {
    font-weight: 500;
    color: #185c37;
}

.ribbon-tabs a.on::after {
    content: "";
    position: absolute;
    left: 0;
    right: 0;
    bottom: -2px;
    height: 2px;
    background: #107c41;
}

.comments, .share {
    height: 24px;
    display: flex;
    align-items: center;
    justify-content: center;
    gap: 3px;
    padding: 0;
    border-radius: 4px;
    font: inherit;
}

.comments {
    width: 90px;
    background: #fff;
    border: 1px solid #8a8a8a;
    color: #222;
}

.share {
    width: 71px;
    margin-left: 8px;
    background: #107c41;
    border: 0;
    color: #fff;
}

.share .chev { margin-left: 4px; }

/* ribbon */
.ribbon {
    position: relative;
    height: 100px;
    flex: none;
    margin: 0 8px;
    padding-top: 5px;
    display: flex;
    background: #fff;
    border-radius: 8px;
    box-shadow: 0 1px 3px rgba(0, 0, 0, .25);
    font-size: 12px;
    color: #333;
}

.group {
    position: relative;
    height: 89px;
    flex: none;
    display: flex;
    flex-direction: column;
    border-right: 1px solid #d4d4d4;
}

.group-body {
    height: 77px;
    flex: none;
    display: flex;
}

.group-body.col, .col {
    flex-direction: column;
    display: flex;
}

.group-label {
    position: relative;
    height: 16px;
    line-height: 16px;
    text-align: center;
    color: #444;
}

.clipboard .group-label, .font .group-label { padding-right: 12px; }
.group-label.pad14 { padding-right: 14px; }

.launcher {
    position: absolute;
    right: 2px;
    top: 4px;
    width: 8px;
    height: 8px;
    border-left: 1px solid #666;
    border-top: 1px solid #666;
}

.launcher::after {
    content: "";
    position: absolute;
    left: 2px;
    top: 2px;
    width: 4px;
    height: 4px;
    border-right: 1px solid #666;
    border-bottom: 1px solid #666;
}

.clipboard { width: 111px; }
.font { width: 236px; }
.align { width: 205px; }
.number { width: 162px; }
.styles { width: 185px; }
.cells { width: 105px; }
.editing { width: 158px; }
.sensitivity { width: 74px; }
.addins { width: 64px; }
.analyze { width: 61px; }

.clipboard .group-body { padding-left: 16px; }
.font .group-body { padding-left: 9px; }
.number .group-body { padding-left: 10px; }
.align .group-body { padding-left: 9px; }
.styles .group-body { padding-left: 12px; }
.cells .group-body { padding-left: 12px; }
.editing .group-body { padding-left: 14px; }
.sensitivity .group-body, .addins .group-body, .analyze .group-body {
    justify-content: center;
}

.big-btn {
    width: 36px;
    padding-top: 4px;
    display: flex;
    flex-direction: column;
    align-items: center;
    white-space: nowrap;
    line-height: 16px;
}

.big-btn svg { margin-bottom: 5px; }
.big-btn > .chev { margin-top: 5px; }
.big-btn.w40 { width: 40px; flex: none; }
.big-btn.disabled { color: #b4b4b4; }

.tool-col {
    display: grid;
    grid-auto-rows: 26px;
    align-items: center;
    justify-items: start;
    margin: -2px 0 0 8px;
}

.row-i {
    display: flex;
    align-items: center;
}

.ml3 { margin-left: 3px; }
.ml4 { margin-left: 4px; }
.ml5 { margin-left: 5px; }
.ml6 { margin-left: 6px; }
.ml7 { margin-left: 7px; }
.ml8 { margin-left: 8px; }
.ml12 { margin-left: 12px; }

.tool-row {
    height: 24px;
    flex: none;
    display: flex;
    align-items: center;
    margin-top: 7px;
}

.ti {
    height: 24px;
    flex: none;
    display: flex;
    align-items: center;
    justify-content: center;
}

.w10 { width: 10px; }
.w12 { width: 12px; }
.w14 { width: 14px; }
.w16 { width: 16px; }
.w20 { width: 20px; }
.w22 { width: 22px; }
.w24 { width: 24px; }
.w26 { width: 26px; }

.select {
    height: 24px;
    display: flex;
    align-items: center;
    justify-content: space-between;
    padding: 0 6px 0 3px;
    border: 1px solid #8a8a8a;
    border-radius: 4px;
    font-size: 13px;
    letter-spacing: -.35px;
    margin-right: 3px;
}

.select.w122 { width: 122px; }
.select.w42 { width: 42px; }
.select.w144 { width: 144px; }

.grow-a, .shrink-a {
    font-size: 17px;
    margin-left: 6px;
    width: 22px;
}

.grow-a { margin-left: 5px; }
.shrink-a { font-size: 15px; margin-left: 5px; }

sup {
    font-size: 8px;
    color: #2b7cd3;
    vertical-align: 6px;
    line-height: 0;
}

.b { font-weight: 700; font-size: 14px; color: #333; }
.it { font-style: italic; font-family: "Liberation Serif", serif; font-size: 15px; }
.un { text-decoration: underline; font-size: 14px; }

.vsep {
    width: 1px;
    height: 24px;
    flex: none;
    background: #d4d4d4;
}

.vsep.m4 { margin: 0 4px; }
.vsep.tall { height: 56px; margin: 7px 6px 0 5px; }

.color-a {
    font-size: 15px;
    border-bottom: 3px solid #f00;
    height: 18px;
    line-height: 14px;
    align-items: flex-end;
}

.lines path { stroke: #444; fill: none; }

.picked {
    background: #e6e6e6;
    border: 1px solid #8a8a8a;
    border-radius: 4px;
}

.align-left { width: 130px; }

.wrap-ab {
    display: block;
    height: 24px;
    font-size: 10px;
    line-height: 10px;
    text-align: center;
    padding-top: 2px;
    color: #444;
}

.wrap-ab svg { display: inline-block; }

.sym { font-size: 17px; color: #333; }

.dec {
    display: block;
    font-size: 10px;
    line-height: 10px;
    padding-top: 2px;
    text-align: center;
    color: #444;
}

.dec b { color: #2b7cd3; font-weight: 400; }

.text-col {
    margin: -1px 0 0;
}

.text-col svg { margin-right: 4px; }
.text-col .chev { margin-left: 5px; }
.text-col .chev.ml18 { margin-left: 17px; }
.text-col span { white-space: nowrap; }

.edit-col {
    width: 45px;
    margin: -2px 0 0;
    flex: none;
}

.sigma { font-size: 19px; color: #444; width: 16px; }

.sort-a { font: 17px Roboto, sans-serif; fill: #2b7cd3; }
.sort-z { font: 16px Roboto, sans-serif; fill: #444; }

.collapse {
    position: absolute;
    left: 1385px;
    top: 84px;
    width: 7px;
    height: 7px;
}

/* formula bar */
.formula-row {
    height: 44px;
    flex: none;
    margin: 9px 8px 8px;
    display: flex;
    align-items: flex-start;
}

.name-box {
    width: 101px;
    height: 24px;
    display: flex;
    align-items: center;
    justify-content: space-between;
    padding: 0 8px 0 7px;
    background: #fff;
    border: 1px solid #dedede;
    border-radius: 4px;
    font-size: 14px;
    letter-spacing: -.6px;
}

.name-box .chev { width: 6px; height: 6px; }

.dots {
    width: 22px;
    text-align: center;
    line-height: 24px;
    font-size: 15px;
    font-weight: 700;
}

.fx-box {
    width: 85px;
    height: 24px;
    display: flex;
    align-items: center;
    gap: 8px;
    padding-left: 6px;
    background: #fff;
    border: 1px solid #dedede;
    border-radius: 4px;
}

.fx {
    font: italic 700 17px "Liberation Serif", serif;
    color: #444;
}

.fx-box .chev { margin-left: -4px; }

.formula-input {
    flex: 1;
    height: 44px;
    margin-left: 5px;
    display: flex;
    justify-content: space-between;
    padding: 1px 7px 0 10px;
    background: #fff;
    border: 1px solid #dedede;
    border-radius: 4px;
    font-size: 14px;
    letter-spacing: -.5px;
    line-height: 20px;
}

.formula-input .chev { margin-top: 9px; }

/* grid */
.sheet-area {
    height: 630px;
    flex: none;
    display: flex;
}

.sheet {
    width: 1398px;
    height: 630px;
    overflow: hidden;
    background: #fff;
    display: grid;
    grid-template-columns: 26px repeat(21, 64px) 28px;
    grid-auto-rows: 20px;
    align-content: start;
    font-size: 14px;
    letter-spacing: -.65px;
    color: #111;
}

.cell {
    height: 20px;
    padding: 0 3px;
    overflow: hidden;
    white-space: nowrap;
    line-height: 20px;
    border-right: 1px solid #d8d8d8;
    border-bottom: 1px solid #d8d8d8;
}

.cell.num { text-align: right; }

.cell.sel {
    position: relative;
    overflow: visible;
    outline: 2px solid #1e6e43;
    outline-offset: -2px;
}

.cell.sel::after {
    content: "";
    position: absolute;
    right: -3px;
    bottom: -3px;
    width: 6px;
    height: 6px;
    background: #1e6e43;
    border: 1px solid #fff;
    z-index: 2;
}

.row-head, .col-head {
    height: 20px;
    background: #f0f0f0;
    text-align: center;
    color: #444;
    line-height: 20px;
    border-right: 1px solid #b4b4b4;
    border-bottom: 1px solid #d0d0d0;
}

.col-head {
    height: 19px;
    line-height: 18px;
    border-bottom: 1px solid #9a9a9a;
    margin-bottom: 1px;
    color: #222;
}

.col-head.corner {
    position: relative;
}

.col-head.corner::after {
    content: "";
    position: absolute;
    right: 2px;
    bottom: 2px;
    border-left: 14px solid transparent;
    border-bottom: 14px solid #c2c2c2;
}

.row-head.picked-row {
    background: #c9c9c9;
    color: #236b42;
}

.col-head.picked-col {
    background: #d2d2d2;
    color: #236b42;
}

.col-head.blank {
    border-right: 0;
}

.vscroll {
    position: relative;
    width: 22px;
    height: 630px;
    padding: 4px 0 0 4px;
}

.vscroll svg { margin-left: 2.500px; }

.vthumb {
    display: block;
    width: 9px;
    height: 17px;
    margin: 2px 0 0 3px;
    background: #777;
    border-radius: 5px;
}

.vscroll .vdown {
    position: absolute;
    left: 4px;
    bottom: 2px;
}

.sheet-bar {
    position: relative;
    height: 32px;
    flex: none;
    display: flex;
    align-items: center;
    padding-left: 28px;
}

.nav-r { margin-left: 24px; }

.sheet-tab {
    width: 79px;
    height: 28px;
    margin: -4px 0 0 48px;
    display: flex;
    justify-content: center;
    background: #fff;
    border-radius: 0 0 5px 5px;
    box-shadow: 0 1px 2px rgba(0, 0, 0, .15);
}

.sheet-tab span {
    height: 25px;
    line-height: 27px;
    width: 63px;
    text-align: center;
    font-weight: 500;
    color: #185c37;
    border-bottom: 2px solid #107c41;
    font-size: 13px;
}

.tab-sep {
    width: 1px;
    height: 18px;
    margin-left: 4px;
    background: #c8c8c8;
}

.add-sheet { margin-left: 42px; }

.bar-dots {
    position: absolute;
    left: 843px;
    top: 4px;
}

.hscroll {
    position: absolute;
    left: 873px;
    top: 7px;
    width: 528px;
    height: 17px;
    display: flex;
    align-items: center;
    padding-left: 3px;
    background: #f7f7f7;
    border-radius: 8px;
}

.hthumb {
    width: 349px;
    height: 9px;
    margin-left: 5px;
    background: #777;
    border-radius: 5px;
}

.hright { margin-left: auto; margin-right: 6px; }

.status-bar {
    flex: 1;
    display: flex;
    align-items: center;
    padding-left: 11px;
    border-top: 1px solid #c6c6c6;
    background: #f3f3f3;
    font-size: 11.500px;
    color: #333;
}

.access { margin-left: 20px; }
.access-text { margin-left: 2px; margin-right: auto; }

.view-btn {
    width: 40px;
    height: 22px;
    display: flex;
    align-items: center;
    justify-content: center;
}

.view-btn.on { background: #dcdcdc; }

.zoom {
    display: flex;
    align-items: center;
    margin-left: 3px;
    padding-right: 19px;
}

.zoom-sign { width: 12px; text-align: center; font-size: 14px; }

.zoom-track {
    position: relative;
    width: 102px;
    height: 1px;
    margin: 0 2px;
    background: #555;
}

.zoom-track i {
    position: absolute;
    left: 49px;
    top: -5px;
    width: 4px;
    height: 11px;
    background: #555;
}

.zoom-val { margin-left: 11px; }

/* ghost of the window behind */
.ghost {
    align-items: flex-start;
    padding-top: 13px;
}

.ghost .xl-icon { opacity: .5; margin-left: -2px; }
.ghost-toggle { margin-left: 71px; margin-top: 2px; opacity: .5; }
.ghost-save { margin-left: 13px; opacity: .5; }

.ghost-search {
    position: absolute;
    left: 534px;
    top: 10px;
    width: 368px;
    height: 30px;
    background: #8fc0a4;
}

.ghost-avatar { left: 1240px; top: 13px; }

.back-ribbon {
    height: 100px;
    flex: none;
    margin: 30px 0 0 8px;
    background: #fff;
    border-radius: 8px 0 0 8px;
}

.back-name {
    width: 40px;
    height: 25px;
    margin: 8px 0 0 8px;
    padding-left: 5px;
    line-height: 25px;
    background: #fff;
    border: 1px solid #dedede;
    border-radius: 4px;
}

.back-rows {
    margin-top: 47px;
    border-top: 1px solid #c8c8c8;
    font-size: 14px;
    letter-spacing: -.4px;
    height: 642px;
}

.back-rows li {
    height: 20.400px;
    line-height: 20px;
    width: 22px;
    text-align: center;
    color: #333;
    border-bottom: 1px solid #c8c8c8;
}

.back-rows li.sel { background: #c8c8c8; color: #236b42; }

.back-status {
    border-top: 1px solid #a8a8a8;
    padding: 4px 0 0 11px;
    font-size: 12.500px;
}

/* taskbar */
.taskbar {
    position: absolute;
    left: 0;
    bottom: 0;
    width: 1920px;
    height: 40px;
    display: flex;
    background: linear-gradient(90deg, #3a3027 0%, #3b2f25 45%, #38302a 70%, #262626 85%, #202020 100%);
    color: #fff;
}

.start {
    width: 48px;
    display: flex;
    align-items: center;
    justify-content: center;
    background: #1d2026;
}

.task-search {
    width: 288px;
    display: flex;
    align-items: center;
    gap: 12px;
    padding-left: 12px;
    background: #f0f0f0;
    color: #333;
    font-size: 15px;
}

.task-apps {
    display: flex;
    margin-left: 3px;
}

.app {
    position: relative;
    width: 49px;
    display: flex;
    align-items: center;
    justify-content: center;
}

.app.active { background: #5a5048; }

.app.on::after {
    content: "";
    position: absolute;
    left: 5px;
    right: 5px;
    bottom: 0;
    height: 2px;
    background: #76b9ed;
}

.ico-t { font: 700 9px Roboto, sans-serif; fill: #fff; text-anchor: middle; }
.ico-q { font: 700 14px Roboto, sans-serif; fill: #d8c8ff; text-anchor: middle; }
.ico-d { font: 700 14px Roboto, sans-serif; fill: #fff; text-anchor: middle; }
.ico-s { font: 700 8px Roboto, sans-serif; fill: #fff; text-anchor: middle; }

.tray {
    display: flex;
    margin-left: auto;
}

.t-ico {
    width: 32px;
    display: flex;
    align-items: center;
    justify-content: center;
}

.clock {
    width: 62px;
    display: flex;
    flex-direction: column;
    align-items: center;
    justify-content: center;
    gap: 3px;
    font-size: 12px;
    line-height: 15px;
    color: #eee;
    white-space: nowrap;
}

.notify {
    position: relative;
    width: 55px;
    padding: 12px 0 0 23px;
}

.notify-count {
    position: absolute;
    left: 31px;
    top: 20px;
    width: 20px;
    height: 20px;
    background: #222;
    border: 1px solid #bbb;
    border-radius: 50%;
    text-align: center;
    font-size: 12px;
    line-height: 18px;
}
```

FILE: script.js
```js
// fill the worksheet from the exported csv values
const columns = 'ABCDEFGHIJKLMNOPQRSTU'.split('');
const headers = ['Co Code', 'Batch Id', 'File #', 'Pay #', 'Reg Hours', 'Reg Earnings', 'Rate Code', 'O/T Hours', 'Temp Rate', 'Temp State', 'Temp Work',
    'Hours 3 Code', 'Hours 3 Amount', 'Hours 3 Code', 'Hours 3 Amount', 'Hours 3 Code', 'Hours 3 Amount', 'Hours 3 Code', 'Hours 3 Amount', 'Hours 3 Code', 'Hours 3 Amount', 'Adjust'];

// [file, reg hours, o/t hours, temp rate]
const data = [
    [124, 1, '', 45], [124, 1, '', 45], [124, 8, '', 45], [124, 10.5, '', 45], [124, 7, '', 45], [124, 2, '', 45],
    [124, 10, '', 45], [124, 10, '', 45], [124, 10, '', 45], [124, 1.5, '', 45], [124, 8.5, '', 45], [124, 2, '', 45], [124, 8, '', 45],
    [124, '', 2, 45], [124, '', 2, 45], [124, '', 4, 45],
    [90, 10, '', 46], [90, 10, '', 46], [90, 1, '', 46], [90, 10, '', 46], [90, 1, '', 46], [90, 1, '', 46], [90, 7, '', 46],
    [90, '', 0.5, 46], [90, '', 0.5, 46], [90, '', 0.5, 46], [90, '', 0.5, 46], [90, '', 1, 46], [90, '', 0.5, 46], [90, '', 3.5, 46]
];

const sheet = document.getElementById('sheet');

function addCell(className, text) {
    const div = document.createElement('div');
    div.className = className;
    div.textContent = text;
    sheet.appendChild(div);
}

addCell('col-head corner', '');
columns.forEach((col) => addCell(col === 'L' ? 'col-head picked-col' : 'col-head', col));
addCell('col-head blank', '');

addCell('row-head picked-row', '1');
headers.forEach((text, i) => addCell(i === 0 ? 'cell sel' : 'cell', text));

data.forEach((row, i) => {
    const [file, reg, ot, rate] = row;
    const values = ['XH0', 202585, file, '', reg, '', '', ot, rate, 'OR', 'TRNST-OR'];
    addCell('row-head', i + 2);
    for (let c = 0; c < 22; c++) {
        const value = c < values.length ? values[c] : '';
        addCell(typeof value === 'number' ? 'cell num' : 'cell', value);
    }
});
```
